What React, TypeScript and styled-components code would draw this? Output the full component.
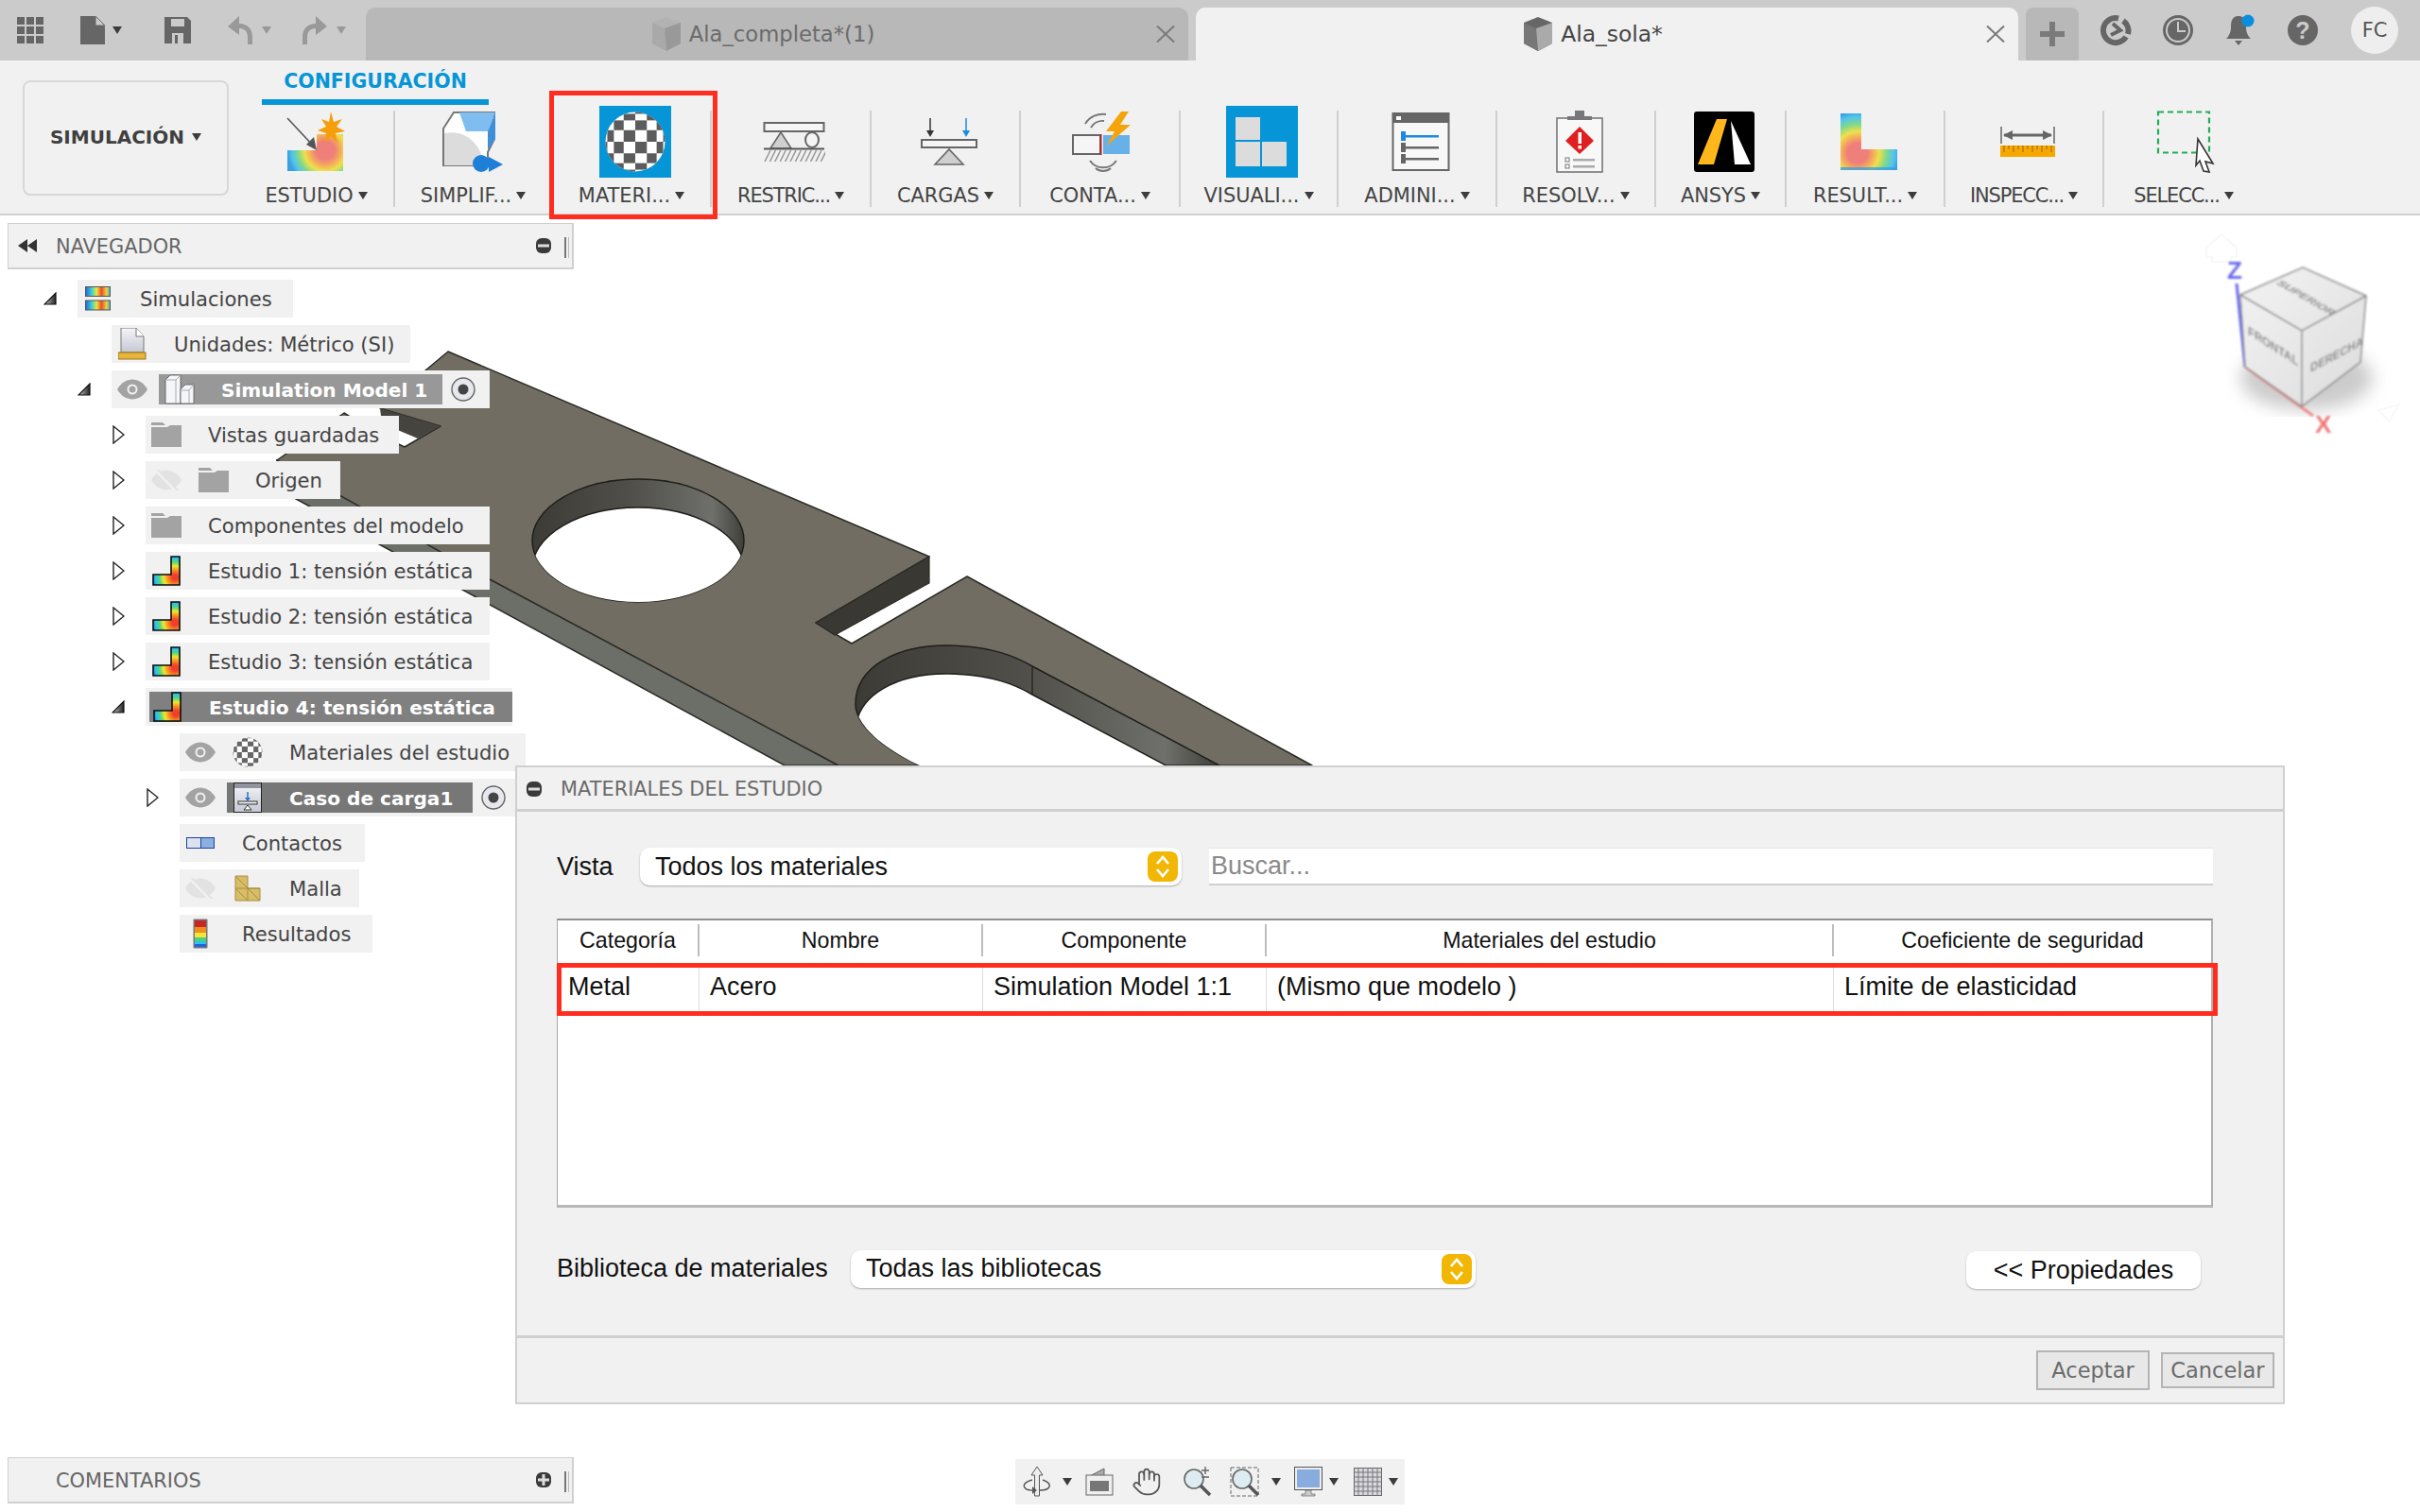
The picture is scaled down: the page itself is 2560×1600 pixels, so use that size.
import React from 'react';
import styled, { createGlobalStyle } from 'styled-components';
import { Hand } from 'lucide-react';

const UI_FONT = '"DejaVu Sans", sans-serif';
const DIALOG_FONT = '"Liberation Sans", Arial, sans-serif';

const GlobalStyle = createGlobalStyle`
  html, body {
    margin: 0;
    padding: 0;
    background: #fff;
  }
  * {
    box-sizing: border-box;
  }
`;

const Page = styled.div`
  position: relative;
  width: 2560px;
  height: 1600px;
  overflow: hidden;
  display: flex;
  flex-direction: column;
  background: #fff;
  font-family: ${UI_FONT};
  font-size: 20.9px;
  color: #444;
`;

/* ---------- title bar ---------- */

const TitleBar = styled.div`
  position: relative;
  z-index: 1;
  height: 64px;
  flex: none;
  display: flex;
  align-items: flex-end;
  background: #cbcbcb;
`;

const QuickTools = styled.div`
  width: 387px;
  height: 64px;
  flex: none;
  display: flex;
  align-items: center;
  padding-left: 18px;
`;

const QuickSlot = styled.div<{ $w: number }>`
  width: ${(p) => p.$w}px;
  flex: none;
  display: flex;
  align-items: center;
`;

const Tab = styled.div<{ $active?: boolean }>`
  width: 870px;
  height: 56px;
  flex: none;
  margin-right: 8px;
  display: flex;
  align-items: center;
  padding: 0 10px 0 8px;
  border-radius: 10px 10px 0 0;
  background: ${(p) => (p.$active ? '#f1f1f1' : '#b8b8b8')};
  color: ${(p) => (p.$active ? '#444' : '#6b6b6b')};
  font-size: ${(p) => (p.$active ? 23.4 : 22.7)}px;
`;

const TabTitle = styled.div`
  flex: 1;
  display: flex;
  justify-content: center;
  align-items: center;
  gap: 8px;
`;

const TabClose = styled.svg`
  width: 28px;
  height: 18px;
  flex: none;
`;

const AddTab = styled.div`
  width: 56px;
  height: 56px;
  flex: none;
  display: flex;
  align-items: center;
  justify-content: center;
  border-radius: 8px 8px 0 0;
  background: #b8b8b8;
`;

const StatusTools = styled.div`
  position: absolute;
  left: 2221px;
  top: 0;
  height: 64px;
  width: 330px;
  display: flex;
  align-items: center;
  gap: 32px;
`;

const Avatar = styled.div`
  width: 50px;
  height: 50px;
  margin-left: 2px;
  flex: none;
  display: flex;
  align-items: center;
  justify-content: center;
  border-radius: 50%;
  background: #eeeeee;
  font-size: 21px;
  color: #555;
`;

/* ---------- ribbon ---------- */

const Ribbon = styled.div`
  position: relative;
  z-index: 1;
  height: 164px;
  flex: none;
  display: flex;
  background: #f1f1f1;
  border-bottom: 2px solid #d0d0d0;
`;

const WorkspaceButton = styled.div`
  width: 218px;
  height: 122px;
  flex: none;
  margin: 21px 35px 0 24px;
  display: flex;
  align-items: center;
  justify-content: center;
  gap: 8px;
  padding-bottom: 2px;
  border: 2px solid #d8d8d8;
  border-radius: 8px;
  font-weight: 700;
  font-size: 20px;
  color: #3f3f3f;
`;

const RibbonMain = styled.div`
  display: flex;
  flex-direction: column;
`;

const RibbonTab = styled.div`
  width: 240px;
  height: 41px;
  margin-top: 6px;
  margin-bottom: 6px;
  display: flex;
  align-items: center;
  justify-content: center;
  padding-bottom: 3px;
  border-bottom: 6px solid #0696d7;
  color: #0696d7;
  font-weight: 700;
  font-size: 20.5px;
  white-space: nowrap;
`;

const RibbonGroups = styled.div`
  display: flex;
`;

const RibbonGroup = styled.div<{ $w: number; $pr?: number; $last?: boolean }>`
  width: ${(p) => p.$w}px;
  height: 102px;
  flex: none;
  display: flex;
  flex-direction: column;
  align-items: center;
  padding-right: ${(p) => p.$pr ?? 0}px;
  border-right: ${(p) => (p.$last ? 'none' : '2px solid #cfcfcf')};
`;

const RibbonIcon = styled.div<{ $shift: number }>`
  height: 76px;
  flex: none;
  margin-top: -5px;
  padding-left: ${(p) => p.$shift}px;
  display: flex;
  align-items: center;
  justify-content: center;
`;

const RibbonLabel = styled.div<{ $tight?: boolean }>`
  height: 24px;
  flex: none;
  margin-top: 7px;
  display: flex;
  align-items: center;
  gap: 5px;
  white-space: nowrap;
  letter-spacing: ${(p) => (p.$tight ? '-1.1px' : '0')};
`;

const Caret = styled.span<{ $ml?: number; $muted?: boolean }>`
  width: 0;
  height: 0;
  flex: none;
  margin-left: ${(p) => p.$ml ?? 0}px;
  border-left: 5.5px solid transparent;
  border-right: 5.5px solid transparent;
  border-top: 8px solid ${(p) => (p.$muted ? '#999' : '#3c3c3c')};
`;

const RedBox = styled.div`
  position: absolute;
  left: 581px;
  top: 96px;
  width: 178px;
  height: 136px;
  z-index: 6;
  border: 5px solid #ff2d20;
`;

/* ---------- workspace ---------- */

const Workspace = styled.div`
  position: relative;
  z-index: 2;
  flex: 1;
  display: flex;
  flex-direction: column;
  justify-content: space-between;
  padding: 8px 0 8px 0;
`;

const ModelCanvas = styled.svg`
  position: absolute;
  left: 0;
  top: 0;
  z-index: 0;
`;

const SharedDefs = styled.svg`
  position: absolute;
  width: 0;
  height: 0;
`;

const PanelBar = styled.div`
  width: 599px;
  height: 49px;
  margin-left: 8px;
  flex: none;
  display: flex;
  align-items: center;
  background: #f1f1f1;
  border: 2px solid #d0d0d0;
  border-top-width: 1px;
  border-left-width: 1px;
  color: #666;
`;

const PanelBarTitle = styled.div<{ $ml: number }>`
  flex: 1;
  margin-left: ${(p) => p.$ml}px;
  padding-top: 1px;
`;

const RewindSlot = styled.div`
  margin-left: 10px;
  display: flex;
`;

const GripSlot = styled.div`
  margin: 0 0 -4px 14px;
  display: flex;
`;

const NavColumn = styled.div`
  position: relative;
  z-index: 3;
`;

const Tree = styled.div`
  margin-top: 11px;
  display: flex;
  flex-direction: column;
  gap: 8px;
`;

const TreeLine = styled.div<{ $level: number }>`
  height: 40px;
  display: flex;
  padding-left: ${(p) => 46 + p.$level * 36}px;
`;

const ArrowSlot = styled.div`
  width: 36px;
  flex: none;
  display: flex;
  align-items: center;
`;

const TreeRow = styled.div<{ $w: number; $pl?: number }>`
  width: ${(p) => p.$w}px;
  height: 40px;
  flex: none;
  display: flex;
  align-items: center;
  padding-left: ${(p) => p.$pl ?? 6}px;
  background: #f1f1f1;
  font-size: 21.1px;
`;

const IconSlot = styled.div<{ $gap?: number }>`
  width: 32px;
  flex: none;
  margin-right: ${(p) => p.$gap ?? 28}px;
  display: flex;
  justify-content: center;
  align-items: center;
`;

const TreeText = styled.span`
  padding-top: 1px;
  white-space: nowrap;
`;

const Highlight = styled.div<{ $w: number; $bg: string; $pl?: number }>`
  width: ${(p) => p.$w}px;
  height: 32px;
  flex: none;
  display: flex;
  align-items: center;
  padding-left: ${(p) => p.$pl ?? 6}px;
  background: ${(p) => p.$bg};
  color: #fff;
  font-weight: 700;
  font-size: 20.1px;
`;

const RadioWrap = styled.div`
  margin-left: 9px;
  display: flex;
`;

/* ---------- dialog ---------- */

const Dialog = styled.div`
  position: absolute;
  left: 545px;
  top: 810px;
  width: 1872px;
  height: 676px;
  z-index: 2;
  display: flex;
  flex-direction: column;
  background: #f1f1f1;
  border: 2px solid #d0d0d0;
`;

const DialogHeader = styled.div`
  height: 47px;
  flex: none;
  display: flex;
  align-items: center;
  gap: 20px;
  padding: 1px 0 0 10px;
  border-bottom: 3px solid #cfcfcf;
  color: #6b6b6b;
`;

const DialogBody = styled.div`
  flex: 1;
  display: flex;
  flex-direction: column;
  padding: 38px 74px 0 42px;
  font-family: ${DIALOG_FONT};
  font-size: 27px;
  color: #111;
`;

const FormRow = styled.div`
  display: flex;
  align-items: center;
`;

const FieldLabel = styled.div<{ $w: number }>`
  width: ${(p) => p.$w}px;
  flex: none;
  white-space: nowrap;
`;

const SelectBox = styled.div<{ $w: number }>`
  width: ${(p) => p.$w}px;
  height: 40px;
  flex: none;
  display: flex;
  align-items: center;
  justify-content: space-between;
  padding: 0 4px 0 16px;
  background: #fff;
  border-radius: 10px;
  box-shadow: 0 1px 2px rgba(0, 0, 0, 0.3);
`;

const Stepper = styled.div`
  width: 32px;
  height: 32px;
  flex: none;
  display: flex;
  align-items: center;
  justify-content: center;
  border-radius: 8px;
  background: #f2b705;
`;

const SearchBox = styled.div`
  flex: 1;
  height: 40px;
  margin-left: 29px;
  padding-left: 2px;
  display: flex;
  align-items: center;
  background: #fff;
  border-bottom: 2px solid #cfcfcf;
  border-top: 1px solid #e6e6e6;
  color: #8a8a8a;
`;

const TableFrame = styled.div`
  position: relative;
  height: 306px;
  margin-top: 35px;
  background: #fff;
  border-top: 2px solid #8f8f8f;
  border-left: 1px solid #a8a8a8;
  border-right: 2px solid #b0b0b0;
  border-bottom: 3px solid #b8b8b8;
`;

const TableGrid = styled.div`
  display: grid;
  grid-template-columns: 150px 300px 300px 600px 1fr;
`;

const HeadCell = styled.div<{ $last?: boolean }>`
  height: 34px;
  margin: 4px 0 7px;
  display: flex;
  align-items: center;
  justify-content: center;
  font-size: 23.2px;
  color: #111;
  border-right: ${(p) => (p.$last ? 'none' : '2px solid #bdbdbd')};
`;

const BodyCell = styled.div<{ $last?: boolean }>`
  height: 56px;
  display: flex;
  align-items: center;
  padding: 0 0 5px 11px;
  border-right: ${(p) => (p.$last ? 'none' : '1px solid #dddddd')};
`;

const RowOutline = styled.div`
  position: absolute;
  left: -1px;
  right: -7px;
  top: 45px;
  height: 56px;
  border: 5px solid #ff2d20;
`;

const LibraryRow = styled(FormRow)`
  margin-top: 43px;
`;

const PropertiesButton = styled.div`
  width: 248px;
  height: 40px;
  margin: 3px 13px 0 auto;
  display: flex;
  align-items: center;
  justify-content: center;
  background: #fff;
  border-radius: 10px;
  box-shadow: 0 1px 2px rgba(0, 0, 0, 0.25);
`;

const DialogFooter = styled.div`
  height: 71px;
  flex: none;
  display: flex;
  align-items: center;
  justify-content: flex-end;
  gap: 12px;
  padding-right: 9px;
  border-top: 3px solid #cfcfcf;
`;

const FooterButton = styled.div<{ $h: number }>`
  width: 120px;
  height: ${(p) => p.$h}px;
  display: flex;
  align-items: center;
  justify-content: center;
  background: #e8e8e8;
  border: 2px solid #b4b4b4;
  color: #6b6b6b;
  font-size: 22.5px;
`;

/* ---------- bottom ---------- */

const BottomRow = styled.div`
  position: relative;
  z-index: 3;
  display: flex;
  align-items: flex-start;
`;

const NavBar = styled.div`
  width: 412px;
  height: 48px;
  margin: 2px 0 0 467px;
  display: flex;
  align-items: center;
  background: #f1f1f1;
`;

const NavSlot = styled.div<{ $ml: number }>`
  margin-left: ${(p) => p.$ml}px;
  display: flex;
  align-items: center;
`;

/* ---------- drawings ---------- */

const HeatDefs = () => (
  <SharedDefs>
    <defs>
      <radialGradient id="heatStudy" gradientUnits="userSpaceOnUse" cx="24" cy="23" r="24">
        <stop offset="0.12" stopColor="#f23c2c" />
        <stop offset="0.34" stopColor="#f79a1f" />
        <stop offset="0.5" stopColor="#f0e634" />
        <stop offset="0.68" stopColor="#53d67c" />
        <stop offset="0.85" stopColor="#2bc4ea" />
        <stop offset="1" stopColor="#2364e0" />
      </radialGradient>
      <radialGradient id="heatSoft" gradientUnits="userSpaceOnUse" cx="42" cy="42" r="40">
        <stop offset="0.24" stopColor="#ef7f7a" />
        <stop offset="0.38" stopColor="#f4a55f" />
        <stop offset="0.55" stopColor="#efe04a" />
        <stop offset="0.72" stopColor="#7fd88e" />
        <stop offset="0.88" stopColor="#52c4ee" />
        <stop offset="1" stopColor="#3a9fe0" />
      </radialGradient>
      <radialGradient id="heatResult" gradientUnits="userSpaceOnUse" cx="18" cy="42" r="44">
        <stop offset="0.24" stopColor="#ef7f7a" />
        <stop offset="0.36" stopColor="#f4a55f" />
        <stop offset="0.52" stopColor="#efe04a" />
        <stop offset="0.7" stopColor="#7fd88e" />
        <stop offset="0.88" stopColor="#52c4ee" />
        <stop offset="1" stopColor="#3a9fe0" />
      </radialGradient>
      <linearGradient id="heatBand" x1="0" x2="1" y1="0" y2="0">
        <stop offset="0" stopColor="#2364e0" />
        <stop offset="0.25" stopColor="#39d0d0" />
        <stop offset="0.45" stopColor="#e8e63c" />
        <stop offset="0.65" stopColor="#f04a2c" />
        <stop offset="0.85" stopColor="#e8d43c" />
        <stop offset="1" stopColor="#38b0e0" />
      </linearGradient>
      <linearGradient id="paper" x1="0" x2="0" y1="0" y2="1">
        <stop offset="0" stopColor="#f4f5f8" />
        <stop offset="1" stopColor="#c4c8d2" />
      </linearGradient>
      <linearGradient id="wallShade" x1="0" x2="1" y1="0" y2="0">
        <stop offset="0" stopColor="#3c3b36" />
        <stop offset="0.45" stopColor="#4f4e49" />
        <stop offset="0.85" stopColor="#6f706b" />
        <stop offset="1" stopColor="#3f3f3a" />
      </linearGradient>
      <linearGradient id="cubeFace" x1="0" x2="1" y1="0" y2="1">
        <stop offset="0" stopColor="#f3f3f3" />
        <stop offset="1" stopColor="#dcdcdc" />
      </linearGradient>
      <linearGradient id="arrowFill" x1="0" x2="1" y1="0" y2="0">
        <stop offset="0" stopColor="#c8c8c8" />
        <stop offset="1" stopColor="#222" />
      </linearGradient>
      <filter id="softBlur">
        <feGaussianBlur stdDeviation="9" />
      </filter>
      <filter id="tinyBlur">
        <feGaussianBlur stdDeviation="0.8" />
      </filter>
    </defs>
  </SharedDefs>
);

const CheckerSphere = ({ size, id, dark = '#5c5c5c' }: { size: number; id: string; dark?: string }) => {
  const r = size / 2;
  const edges = [-4, -3, -2, -1, 0, 1, 2, 3, 4].map((i) => r + r * Math.sin((i * Math.PI) / 8));
  const cells: React.ReactNode[] = [];
  for (let c = 0; c < 8; c++) {
    for (let w = 0; w < 8; w++) {
      if ((c + w) % 2 === 0) {
        cells.push(
          <rect key={`${c}-${w}`} x={edges[c]} y={edges[w]} width={edges[c + 1] - edges[c]} height={edges[w + 1] - edges[w]} fill={dark} />,
        );
      }
    }
  }
  return (
    <svg width={size} height={size} viewBox={`0 0 ${size} ${size}`}>
      <clipPath id={id}>
        <circle cx={r} cy={r} r={r - 0.5} />
      </clipPath>
      <circle cx={r} cy={r} r={r - 0.5} fill="#fff" />
      <g clipPath={`url(#${id})`}>{cells}</g>
    </svg>
  );
};

const StudyRibbonIcon = () => (
  <svg width="66" height="66" viewBox="0 0 66 66">
    <path d="M33 25 H61 V64 H2 V42 H33 Z" fill="url(#heatSoft)" />
    <path d="M2 8 L30 38" stroke="#555" strokeWidth="1.6" />
    <path d="M33 42 L22 36 L30 28 Z" fill="#555" />
    <path
      d="M48 1 L51 12 L60 9 L54 17 L63 22 L53 24 L55 35 L48 27 L42 35 L43 24 L34 21 L43 17 L38 9 L46 12 Z"
      fill="#f59e0b"
    />
  </svg>
);

const SimplifyIcon = () => (
  <svg width="66" height="66" viewBox="0 0 66 66">
    <path d="M12 2 H55 V30 L48 44 V58 H1 V19 Z" fill="#fff" stroke="#777" strokeWidth="2" />
    <path d="M2 24 C20 20 40 30 44 58 H2 Z" fill="#dcdcdc" />
    <path d="M18 2 H56 L48 22 H25 Z" fill="#7fbdf0" />
    <path d="M56 2 V30 L48 42 V22 Z" fill="#3f8fd8" />
    <circle cx="41" cy="56" r="9" fill="#1e7fd8" />
    <path d="M49 49 L64 57 L49 65 Z" fill="#1e7fd8" />
  </svg>
);

const BlueTile = styled.div`
  width: 76px;
  height: 76px;
  display: flex;
  align-items: center;
  justify-content: center;
  background: #0696d7;
`;

const RestraintIcon = () => (
  <svg width="66" height="42" viewBox="0 0 66 42">
    <rect x="1.5" y="1" width="63" height="9" fill="#f5f5f5" stroke="#666" strokeWidth="2" />
    <path d="M8 28 L19 11 L30 28 Z" fill="#cfcfcf" stroke="#666" strokeWidth="1.5" />
    <ellipse cx="52" cy="19" rx="7" ry="8" fill="#f5f5f5" stroke="#666" strokeWidth="2" />
    <rect x="1" y="27.5" width="64" height="2" fill="#555" />
    <g stroke="#999" strokeWidth="1.6">
      {Array.from({ length: 12 }).map((_, i) => (
        <path key={i} d={`M${2 + i * 5.4} 42 L${8 + i * 5.4} 30`} />
      ))}
    </g>
  </svg>
);

const LoadIcon = () => (
  <svg width="62" height="50" viewBox="0 0 62 50">
    <path d="M11 0 V14" stroke="#333" strokeWidth="1.5" />
    <path d="M7 13 L11 20 L15 13 Z" fill="#333" />
    <path d="M49 0 V14" stroke="#1e88e5" strokeWidth="1.5" />
    <path d="M45 13 L49 20 L53 13 Z" fill="#1e88e5" />
    <rect x="2" y="23" width="58" height="8" fill="#f5f5f5" stroke="#666" strokeWidth="2" />
    <path d="M16 49 L31 33 L46 49 Z" fill="#cfcfcf" stroke="#666" strokeWidth="1.6" />
  </svg>
);

const ContactIcon = () => (
  <svg width="66" height="66" viewBox="0 0 66 66">
    <path d="M14 14 A22 22 0 0 1 36 4" fill="none" stroke="#777" strokeWidth="2" />
    <path d="M20 18 A14 14 0 0 1 34 11" fill="none" stroke="#777" strokeWidth="2" />
    <rect x="1" y="26" width="29" height="20" fill="#f5f5f5" stroke="#666" strokeWidth="2" />
    <rect x="33" y="26" width="28" height="20" fill="#68b0e8" />
    <rect x="29.5" y="25" width="2" height="22" fill="#b0282c" />
    <path d="M52 1 L36 22 L45 22 L36 38 L62 15 L51 15 L60 1 Z" fill="#f5a50b" />
    <path d="M19 53 A17 17 0 0 0 47 53" fill="none" stroke="#777" strokeWidth="2" />
    <path d="M25 61 A12 12 0 0 0 41 61" fill="none" stroke="#777" strokeWidth="2" />
  </svg>
);

const DisplayTiles = styled.div`
  width: 76px;
  height: 76px;
  display: grid;
  grid-template-columns: 26px 26px;
  grid-template-rows: 24px 26px;
  gap: 2px;
  padding: 12px 10px;
  background: #0696d7;
`;

const DisplayTile = styled.div`
  background: #dcdcdc;
`;

const ManageIcon = () => (
  <svg width="62" height="62" viewBox="0 0 62 62">
    <rect x="1.5" y="1" width="59" height="60" fill="#f8f8f8" stroke="#666" strokeWidth="2" />
    <rect x="1" y="0" width="60" height="11" fill="#666" />
    <rect x="5" y="4" width="5" height="4" fill="#fff" />
    <rect x="10" y="20" width="5" height="10" fill="#1e88e5" />
    <rect x="15" y="24" width="35" height="2.5" fill="#1e88e5" />
    <rect x="10" y="32" width="5" height="10" fill="#666" />
    <rect x="15" y="36" width="35" height="2.5" fill="#666" />
    <rect x="10" y="44" width="5" height="10" fill="#666" />
    <rect x="15" y="48" width="35" height="2.5" fill="#666" />
  </svg>
);

const SolveIcon = () => (
  <svg width="50" height="66" viewBox="0 0 50 66">
    <rect x="1" y="8" width="48" height="57" fill="#f8f8f8" stroke="#777" strokeWidth="1.6" />
    <path d="M12 10 V6 H20 V0 H30 V6 H38 V10 Z" fill="#777" />
    <path d="M25 17 L40 32 L25 46 L10 32 Z" fill="#e02020" />
    <rect x="23.5" y="23" width="3.5" height="12" fill="#fff" />
    <rect x="23.5" y="37" width="3.5" height="3.5" fill="#fff" />
    <rect x="10" y="50" width="4" height="4" fill="none" stroke="#777" />
    <rect x="10" y="57" width="4" height="4" fill="none" stroke="#777" />
    <rect x="18" y="51" width="23" height="2.5" fill="#aaa" />
    <rect x="18" y="58" width="23" height="2.5" fill="#aaa" />
  </svg>
);

const AnsysIcon = () => (
  <svg width="64" height="64" viewBox="0 0 64 64">
    <rect width="64" height="64" rx="3" fill="#000" />
    <path d="M24 8 H35 L21 56 H4 Z" fill="#ffb71b" />
    <path d="M39 10 L60 56 H43 Z" fill="#fff" />
  </svg>
);

const ResultIcon = () => (
  <svg width="60" height="60" viewBox="0 0 60 60">
    <path d="M0 0 H22 V38 H60 V60 H0 Z" fill="url(#heatResult)" />
    <rect x="0" y="57" width="60" height="3" fill="#3a9fe0" opacity="0.8" />
  </svg>
);

const InspectIcon = () => (
  <svg width="58" height="32" viewBox="0 0 58 32">
    <path d="M1 0 V18 M57 0 V18" stroke="#666" strokeWidth="1.5" />
    <path d="M4 9 H54" stroke="#666" strokeWidth="3" />
    <path d="M3 9 L13 4 V14 Z M55 9 L45 4 V14 Z" fill="#666" />
    <rect x="0" y="20" width="58" height="12" fill="#f6a800" />
    <g stroke="#a86f00" strokeWidth="1.2">
      {Array.from({ length: 11 }).map((_, i) => (
        <path key={i} d={`M${4 + i * 5} 20 V${i % 2 === 0 ? 27 : 24}`} />
      ))}
    </g>
  </svg>
);

const SelectIcon = () => (
  <svg width="66" height="66" viewBox="0 0 66 66">
    <rect x="2" y="1.5" width="54" height="43" fill="none" stroke="#21ad57" strokeWidth="2.2" strokeDasharray="6 4" />
    <path d="M44 30 L60 56 L52 54 L56 65 L50 64 L46 53 L42 58 Z" fill="#fff" stroke="#333" strokeWidth="1.6" />
  </svg>
);

const BodyCube = ({ light, dark, mid }: { light: string; dark: string; mid: string }) => (
  <svg width="32" height="36" viewBox="0 0 32 36">
    <path d="M16 0 L31 6 V28 L16 36 L1 28 V6 Z" fill={mid} />
    <path d="M1 6 L14 12 L16 36 L1 28 Z" fill={light} />
    <path d="M14 12 L31 6 V28 L16 36 Z" fill={dark} />
  </svg>
);

const CloseX = () => (
  <TabClose viewBox="0 0 28 18">
    <path d="M5 0.5 L23 17.5 M23 0.5 L5 17.5" stroke="#7a7a7a" strokeWidth="2" />
  </TabClose>
);

const GridIcon = () => (
  <svg width="28" height="28" viewBox="0 0 28 28" fill="#666">
    {[0, 10, 20].map((x) => [0, 10, 20].map((y) => <rect key={`${x}${y}`} x={x} y={y} width="8" height="8" />))}
  </svg>
);

const FileIcon = () => (
  <svg width="26" height="30" viewBox="0 0 26 30">
    <path d="M0 0 H15 L26 11 V30 H0 Z" fill="#666" />
    <path d="M16 0 L26 10 H16 Z" fill="#cbcbcb" stroke="#666" />
  </svg>
);

const SaveIcon = () => (
  <svg width="28" height="28" viewBox="0 0 28 28">
    <path d="M0 0 H24 L28 4 V28 H0 Z" fill="#666" />
    <rect x="7" y="2" width="14" height="8" fill="#cbcbcb" />
    <rect x="8" y="17" width="12" height="11" fill="#cbcbcb" />
    <rect x="11" y="19" width="3" height="9" fill="#666" />
  </svg>
);

const UndoIcon = () => (
  <svg width="26" height="30" viewBox="0 0 26 30">
    <path d="M12 0 L0 11 L12 20 V13 C18 13 21 17 21 22 V30 H26 V22 C26 13 20 8 12 8 Z" fill="#999" />
  </svg>
);

const RedoIcon = () => (
  <svg width="26" height="30" viewBox="0 0 26 30">
    <path d="M14 0 L26 11 L14 20 V13 C8 13 5 17 5 22 V30 H0 V22 C0 13 6 8 14 8 Z" fill="#999" />
  </svg>
);

const Plus = () => (
  <svg width="26" height="26" viewBox="0 0 26 26" fill="#7a7a7a">
    <rect x="10" y="0" width="6" height="26" />
    <rect x="0" y="10" width="26" height="6" />
  </svg>
);

const SyncIcon = () => (
  <svg width="34" height="34" viewBox="0 0 34 34">
    <path d="M20 4.5 A13 13 0 1 0 28 24" fill="none" stroke="#666" strokeWidth="6" />
    <path d="M30 21 A13 13 0 0 0 25 7" fill="none" stroke="#666" strokeWidth="6" />
    <path d="M14 10 L22 17 L12 22" fill="none" stroke="#666" strokeWidth="4" />
  </svg>
);

const ClockIcon = () => (
  <svg width="34" height="34" viewBox="0 0 34 34">
    <circle cx="17" cy="17" r="16" fill="#666" />
    <circle cx="17" cy="17" r="13" fill="#cbcbcb" />
    <circle cx="17" cy="17" r="11" fill="#666" />
    <path d="M17 8 V18 H25" stroke="#cbcbcb" strokeWidth="2" fill="none" />
  </svg>
);

const BellIcon = () => (
  <svg width="34" height="34" viewBox="0 0 34 34">
    <path d="M15 2 C22 2 23 8 23 14 C23 20 26 24 28 26 H2 C4 24 7 20 7 14 C7 8 8 2 15 2 Z" fill="#666" />
    <path d="M11 28 H19 L15 33 Z" fill="#666" />
    <circle cx="25" cy="7" r="6.5" fill="#0a8fe0" />
  </svg>
);

const HelpIcon = () => (
  <svg width="34" height="34" viewBox="0 0 34 34">
    <circle cx="17" cy="17" r="16" fill="#666" />
    <text x="17" y="26" textAnchor="middle" fontFamily="Liberation Sans" fontWeight="700" fontSize="25" fill="#cbcbcb">
      ?
    </text>
  </svg>
);

const Rewind = () => (
  <svg width="20" height="14" viewBox="0 0 20 14" fill="#333">
    <path d="M0 7 L10 0 V14 Z M10 7 L20 0 V14 Z" />
  </svg>
);

const PillButton = ({ plus }: { plus?: boolean }) => (
  <svg width="16" height="16" viewBox="0 0 16 16">
    <rect width="16" height="16" rx="6" fill="#3a3a3a" />
    <rect x="2" y="6.5" width="12" height="3" fill="#ddd" />
    {plus && <rect x="6.5" y="2" width="3" height="12" fill="#ddd" />}
  </svg>
);

const Grip = () => (
  <svg width="8" height="22" viewBox="0 0 8 22">
    <rect x="0" y="0" width="2" height="22" fill="#777" />
    <rect x="4" y="0" width="1" height="22" fill="#bbb" />
  </svg>
);

const OpenArrow = () => (
  <svg width="14" height="20" viewBox="0 0 14 20">
    <path d="M2 1 L13 10 L2 19 Z" fill="#fff" stroke="#222" strokeWidth="1.4" />
  </svg>
);

const ClosedArrow = () => (
  <svg width="14" height="14" viewBox="0 0 14 14">
    <path d="M13 1 V13 H1 Z" fill="url(#arrowFill)" stroke="#111" strokeWidth="1.2" />
  </svg>
);

const EyeIcon = ({ off }: { off?: boolean }) => (
  <svg width="32" height="22" viewBox="0 0 32 22">
    <path d="M0 11 C8 -3 24 -3 32 11 C24 25 8 25 0 11 Z" fill={off ? '#e2e2e2' : '#a3a3a3'} />
    {!off && <circle cx="16" cy="11" r="5.5" fill="#f1f1f1" />}
    {!off && <circle cx="16" cy="11" r="3.5" fill="#a3a3a3" />}
    {off && <path d="M4 -1 L27 23" stroke="#f1f1f1" strokeWidth="4" />}
    {off && <path d="M6 -1 L29 23" stroke="#e2e2e2" strokeWidth="2" />}
  </svg>
);

const RadioIcon = () => (
  <svg width="26" height="26" viewBox="0 0 26 26">
    <circle cx="13" cy="13" r="12" fill="#e6e8ee" stroke="#666" strokeWidth="1.4" />
    <circle cx="13" cy="13" r="5.5" fill="#444" />
  </svg>
);

const FolderIcon = () => (
  <svg width="32" height="26" viewBox="0 0 32 26" fill="#a3a3a3">
    <path d="M0 0 H12 L15 3 H0 Z" />
    <path d="M0 5 H17 L20 3 H32 V26 H0 Z" />
  </svg>
);

const StudyIcon = () => (
  <svg width="30" height="32" viewBox="0 0 30 32">
    <path d="M1 20 H20 V1 H29 V31 H1 Z" fill="url(#heatStudy)" stroke="#0d0d0d" strokeWidth="1.6" />
  </svg>
);

const SimulationsIcon = () => (
  <svg width="28" height="26" viewBox="0 0 28 26">
    <rect x="0.5" y="0.5" width="26" height="10" fill="url(#heatBand)" stroke="#555" />
    <rect x="0.5" y="15" width="26" height="10" fill="url(#heatBand)" stroke="#555" />
  </svg>
);

const UnitsIcon = () => (
  <svg width="30" height="34" viewBox="0 0 30 34">
    <path d="M3 0 H19 L27 9 V26 H3 Z" fill="url(#paper)" stroke="#777" />
    <path d="M19 0 V9 H27" fill="#fff" stroke="#777" />
    <rect x="0" y="26" width="29" height="7" fill="#e8b33a" stroke="#9a7514" />
  </svg>
);

const ModelBlocks = () => (
  <svg width="32" height="32" viewBox="0 0 32 32">
    <path d="M1 6 L6 1 H17 V31 H1 Z" fill="#f4f6fa" stroke="#555" strokeWidth="0.8" />
    <path d="M1 6 H12 L17 1 M12 6 V31" fill="none" stroke="#aaa" />
    <path d="M17 16 L22 11 H31 V31 H17 Z" fill="#f4f6fa" stroke="#555" strokeWidth="0.8" />
    <path d="M17 17 H26 L31 11 M26 17 V31" fill="none" stroke="#aaa" />
  </svg>
);

const LoadCaseIcon = () => (
  <svg width="30" height="32" viewBox="0 0 30 32">
    <rect x="0.5" y="0.5" width="29" height="31" fill="url(#paper)" stroke="#222" />
    <rect x="1" y="1" width="28" height="5" fill="#8f949e" />
    <path d="M15 10 V18" stroke="#2a6fd0" strokeWidth="1.5" />
    <path d="M12 16 L15 20 L18 16 Z" fill="#2a6fd0" />
    <rect x="5" y="20" width="20" height="3" fill="#eee" stroke="#333" />
    <path d="M11 29 L15 24 L19 29 Z" fill="#fff" stroke="#333" />
  </svg>
);

const ContactsIcon = () => (
  <svg width="30" height="12" viewBox="0 0 30 12">
    <rect x="0.5" y="0.5" width="15" height="11" fill="#dde3ee" stroke="#1f3f9f" />
    <rect x="15.5" y="0.5" width="14" height="11" fill="#8ab0e0" stroke="#1f3f9f" />
  </svg>
);

const MeshIcon = () => (
  <svg width="28" height="28" viewBox="0 0 28 28">
    <path d="M1 1 H14 V14 H27 V27 H1 Z" fill="#d8bd68" stroke="#a88e3e" />
    <path d="M1 14 H27 M14 14 V27 M1 1 L14 14 M1 14 L14 27 M14 14 L27 27" stroke="#a88e3e" fill="none" />
  </svg>
);

const LegendIcon = () => (
  <svg width="16" height="32" viewBox="0 0 16 32">
    <rect x="0.5" y="0.5" width="15" height="31" rx="1" fill="#777" />
    <rect x="2" y="2" width="12" height="7" fill="#c62828" />
    <rect x="2" y="9" width="12" height="6" fill="#ef8f1c" />
    <rect x="2" y="15" width="12" height="5" fill="#f4e53c" />
    <rect x="2" y="20" width="12" height="4" fill="#4ed07a" />
    <rect x="2" y="24" width="12" height="3" fill="#2bc4ea" />
    <rect x="2" y="27" width="12" height="3" fill="#2364e0" />
  </svg>
);

const StepperIcon = () => (
  <svg width="16" height="26" viewBox="0 0 16 26" fill="none" stroke="#fff" strokeWidth="2.6">
    <path d="M2 10 L8 3 L14 10" />
    <path d="M2 16 L8 23 L14 16" />
  </svg>
);

const OrbitIcon = () => (
  <svg width="30" height="32" viewBox="0 0 30 32">
    <path d="M15 0 L21 9 H17.5 V31 H12.5 V9 H9 Z" fill="#eee" stroke="#555" />
    <path d="M10 14 C-3 17 -1 26 13 25 M18 25 C30 25 32 18 21 14" fill="none" stroke="#555" strokeWidth="1.4" />
    <path d="M15 25 L10 21 V29 Z" fill="#555" />
  </svg>
);

const LookIcon = () => (
  <svg width="30" height="30" viewBox="0 0 30 30">
    <path d="M3 10 L20 1 V10 Z" fill="#aaa" stroke="#666" />
    <rect x="1" y="8" width="28" height="21" fill="#efefef" stroke="#666" />
    <rect x="5" y="14" width="20" height="11" fill="#777" />
  </svg>
);

const ZoomIcon = ({ plus, dashed }: { plus?: boolean; dashed?: boolean }) => (
  <svg width="32" height="32" viewBox="0 0 32 32">
    {dashed && <rect x="1" y="1" width="29" height="30" fill="none" stroke="#666" strokeDasharray="4 2" />}
    <circle cx="13" cy="13" r="10" fill="#dcecf0" stroke="#666" strokeWidth="1.6" />
    <path d="M20 20 L30 30" stroke="#555" strokeWidth="3.5" />
    {plus && <path d="M25 0 V8 M21 4 H29 M21 11 H29" stroke="#666" strokeWidth="1.4" />}
  </svg>
);

const DisplayIcon = () => (
  <svg width="30" height="32" viewBox="0 0 30 32">
    <rect x="0.5" y="0.5" width="29" height="24" fill="#eee" stroke="#555" />
    <rect x="3" y="3" width="24" height="19" fill="#88acde" />
    <path d="M12 25 H18 V29 H22 V31 H8 V29 H12 Z" fill="#ccc" stroke="#666" strokeWidth="0.7" />
  </svg>
);

const GridPlaneIcon = () => (
  <svg width="30" height="30" viewBox="0 0 30 30">
    <rect x="0.5" y="0.5" width="29" height="29" fill="#d8d8e0" stroke="#666" />
    <g stroke="#777" strokeWidth="1">
      {[5, 10, 15, 20, 25].map((v) => (
        <path key={v} d={`M${v} 0 V30 M0 ${v} H30`} />
      ))}
    </g>
  </svg>
);

// the part and the orientation cube, in page coordinates
const ModelDrawing = () => (
  <ModelCanvas width="2560" height="1600" viewBox="0 0 2560 1600">
    <clipPath id="hole1">
      <ellipse cx="675" cy="572" rx="112" ry="65" />
    </clipPath>
    <clipPath id="hole2">
      <path d="M905 745 C905 705 950 682 1004 683 C1050 684 1075 695 1092 705 L1290 810 H973 C930 790 905 765 905 745 Z" />
    </clipPath>
    <path d="M293 487 L887 810 H830 L293 517 Z" fill="#6c6e68" stroke="#2b2a26" strokeWidth="1.5" />
    <path
      d="M474 372 L983 589 L863 659 L901 681 L1023 610 L1388 810 H887 L518 613 L293 487 L364 437 L400 460 L428 473 L466 451 L402 432 Z"
      fill="#716d62"
      stroke="#2b2a26"
      strokeWidth="1.5"
      strokeLinejoin="round"
    />
    <path d="M983 589 V617 L883 672 L863 659 Z" fill="#3a3832" stroke="#2b2a26" strokeWidth="1.2" />
    <path d="M402 432 L466 451 L442 464 L404 448 Z" fill="#45443f" />
    <ellipse cx="675" cy="572" rx="112" ry="65" fill="url(#wallShade)" stroke="#1f1e1a" strokeWidth="1.5" />
    <g clipPath="url(#hole1)">
      <ellipse cx="675" cy="602" rx="112" ry="65" fill="#fff" stroke="#1f1e1a" strokeWidth="1.5" />
    </g>
    <path
      d="M905 745 C905 705 950 682 1004 683 C1050 684 1075 695 1092 705 L1290 810 H973 C930 790 905 765 905 745 Z"
      fill="url(#wallShade)"
      stroke="#1f1e1a"
      strokeWidth="1.5"
    />
    <g clipPath="url(#hole2)">
      <path
        d="M905 775 C905 735 950 712 1004 713 C1050 714 1075 725 1092 735 L1290 840 H973 C930 820 905 795 905 775 Z"
        fill="#fff"
        stroke="#1f1e1a"
        strokeWidth="1.5"
      />
    </g>
    <path d="M1092 705 V735" stroke="#1f1e1a" strokeWidth="1.2" />

    <ellipse cx="2440" cy="400" rx="70" ry="34" fill="#999" opacity="0.5" filter="url(#softBlur)" />
    <path d="M2334 262 L2350 248 L2366 262 V272 H2360 V277 H2340 V272 H2334 Z" fill="none" stroke="#f8f8f8" strokeWidth="2" />
    <path d="M2516 434 L2538 428 L2527 446 Z" fill="none" stroke="#f8f8f8" strokeWidth="2" />
    <g filter="url(#tinyBlur)">
      <path d="M2366 300 L2375 388" stroke="#6a6af0" strokeWidth="3" fill="none" />
      <path d="M2375 388 L2447 440" stroke="#ee8a8a" strokeWidth="3" fill="none" />
      <path d="M2370 312 L2436 283 L2503 313 L2497 383 L2435 430 L2375 388 Z" fill="url(#cubeFace)" stroke="#8a8a8a" strokeWidth="1.5" />
      <path d="M2370 312 L2435 350 L2503 313 M2435 350 V430" fill="none" stroke="#8a8a8a" strokeWidth="1.5" />
      <text x="2356" y="295" fontFamily="Liberation Sans" fontWeight="700" fontSize="26" fill="#6a6af0">
        Z
      </text>
      <text x="2449" y="458" fontFamily="Liberation Sans" fontWeight="700" fontSize="26" fill="#f07878">
        X
      </text>
      <g fontFamily="Liberation Sans" fontWeight="700" fontSize="13" fill="#8a8a8a">
        <text transform="matrix(0.87 0.5 -0.75 0.4 2407 300)">SUPERIOR</text>
        <text transform="matrix(0.87 0.55 0 1 2378 354)">FRONTAL</text>
        <text transform="matrix(0.87 -0.45 0 1 2444 394)">DERECHA</text>
      </g>
    </g>
  </ModelCanvas>
);

/* ---------- data ---------- */

const ribbonGroups: { label: string; w: number; icon: React.ReactNode; tight?: boolean; pr?: number; last?: boolean; shift?: number }[] = [
  { label: 'ESTUDIO', w: 141, icon: <StudyRibbonIcon />, pr: 24, shift: 0 },
  { label: 'SIMPLIF...', w: 167, icon: <SimplifyIcon />, shift: 0 },
  {
    label: 'MATERI...',
    w: 168,
    icon: (
      <BlueTile>
        <CheckerSphere size={64} id="ribbonChecker" />
      </BlueTile>
    ),
  },
  { label: 'RESTRIC...', w: 169, icon: <RestraintIcon />, tight: true },
  { label: 'CARGAS', w: 158, icon: <LoadIcon /> },
  { label: 'CONTA...', w: 169, icon: <ContactIcon /> },
  {
    label: 'VISUALI...',
    w: 167,
    icon: (
      <DisplayTiles>
        <DisplayTile />
        <span />
        <DisplayTile />
        <DisplayTile />
      </DisplayTiles>
    ),
  },
  { label: 'ADMINI...', w: 168, icon: <ManageIcon /> },
  { label: 'RESOLV...', w: 168, icon: <SolveIcon /> },
  { label: 'ANSYS', w: 138, icon: <AnsysIcon /> },
  { label: 'RESULT...', w: 168, icon: <ResultIcon /> },
  { label: 'INSPECC...', w: 168, icon: <InspectIcon />, tight: true },
  { label: 'SELECC...', w: 168, icon: <SelectIcon />, last: true, tight: true },
];

type Row = {
  level: number;
  w: number;
  text: string;
  arrow?: 'open' | 'closed';
  eye?: 'on' | 'off';
  icon: React.ReactNode;
  highlight?: { w: number; bg: string; pl?: number };
  radio?: boolean;
  pl?: number;
};

const treeRows: Row[] = [
  { level: 0, w: 228, text: 'Simulaciones', arrow: 'closed', icon: <SimulationsIcon /> },
  { level: 1, w: 316, text: 'Unidades: Métrico (SI)', icon: <UnitsIcon /> },
  {
    level: 1,
    w: 400,
    text: 'Simulation Model 1',
    arrow: 'closed',
    eye: 'on',
    icon: <ModelBlocks />,
    highlight: { w: 300, bg: '#989898' },
    radio: true,
  },
  { level: 2, w: 268, text: 'Vistas guardadas', arrow: 'open', icon: <FolderIcon /> },
  { level: 2, w: 206, text: 'Origen', arrow: 'open', eye: 'off', icon: <FolderIcon /> },
  { level: 2, w: 364, text: 'Componentes del modelo', arrow: 'open', icon: <FolderIcon /> },
  { level: 2, w: 364, text: 'Estudio 1: tensión estática', arrow: 'open', icon: <StudyIcon /> },
  { level: 2, w: 364, text: 'Estudio 2: tensión estática', arrow: 'open', icon: <StudyIcon /> },
  { level: 2, w: 364, text: 'Estudio 3: tensión estática', arrow: 'open', icon: <StudyIcon /> },
  {
    level: 2,
    w: 388,
    text: 'Estudio 4: tensión estática',
    arrow: 'closed',
    icon: <StudyIcon />,
    highlight: { w: 384, bg: '#808080', pl: 3 },
    pl: 4,
  },
  { level: 3, w: 366, text: 'Materiales del estudio', eye: 'on', icon: <CheckerSphere size={32} id="treeChecker" dark="#666" /> },
  {
    level: 3,
    w: 360,
    text: 'Caso de carga1',
    arrow: 'open',
    eye: 'on',
    icon: <LoadCaseIcon />,
    highlight: { w: 260, bg: '#777777' },
    radio: true,
  },
  { level: 3, w: 196, text: 'Contactos', icon: <ContactsIcon /> },
  { level: 3, w: 190, text: 'Malla', eye: 'off', icon: <MeshIcon /> },
  { level: 3, w: 204, text: 'Resultados', icon: <LegendIcon /> },
];

const headers = ['Categoría', 'Nombre', 'Componente', 'Materiales del estudio', 'Coeficiente de seguridad'];
const cells = ['Metal', 'Acero', 'Simulation Model 1:1', '(Mismo que modelo )', 'Límite de elasticidad'];

const TreeItem: React.FC<{ row: Row }> = ({ row }) => {
  const main = (
    <>
      <IconSlot>{row.icon}</IconSlot>
      <TreeText>{row.text}</TreeText>
    </>
  );
  return (
    <TreeLine $level={row.level}>
      <ArrowSlot>
        {row.arrow === 'open' && <OpenArrow />}
        {row.arrow === 'closed' && <ClosedArrow />}
      </ArrowSlot>
      <TreeRow $w={row.w} $pl={row.pl}>
        {row.eye && (
          <IconSlot $gap={row.highlight ? 12 : 18}>
            <EyeIcon off={row.eye === 'off'} />
          </IconSlot>
        )}
        {row.highlight ? (
          <Highlight $w={row.highlight.w} $bg={row.highlight.bg} $pl={row.highlight.pl}>
            {main}
          </Highlight>
        ) : (
          main
        )}
        {row.radio && (
          <RadioWrap>
            <RadioIcon />
          </RadioWrap>
        )}
      </TreeRow>
    </TreeLine>
  );
};

const App: React.FC = () => {
  return (
    <Page>
      <GlobalStyle />
      <HeatDefs />
      <ModelDrawing />

      <TitleBar>
        <QuickTools>
          <QuickSlot $w={67}>
            <GridIcon />
          </QuickSlot>
          <QuickSlot $w={89}>
            <FileIcon />
            <Caret $ml={8} />
          </QuickSlot>
          <QuickSlot $w={67}>
            <SaveIcon />
          </QuickSlot>
          <QuickSlot $w={79}>
            <UndoIcon />
            <Caret $ml={10} $muted />
          </QuickSlot>
          <QuickSlot $w={60}>
            <RedoIcon />
            <Caret $ml={10} $muted />
          </QuickSlot>
        </QuickTools>
        <Tab>
          <TabTitle>
            <BodyCube light="#a9a9a9" dark="#999" mid="#b2b2b2" />
            Ala_completa*(1)
          </TabTitle>
          <CloseX />
        </Tab>
        <Tab $active>
          <TabTitle>
            <BodyCube light="#777" dark="#aaa" mid="#666" />
            Ala_sola*
          </TabTitle>
          <CloseX />
        </Tab>
        <AddTab>
          <Plus />
        </AddTab>
        <StatusTools>
          <SyncIcon />
          <ClockIcon />
          <BellIcon />
          <HelpIcon />
          <Avatar>FC</Avatar>
        </StatusTools>
      </TitleBar>

      <Ribbon>
        <WorkspaceButton>
          SIMULACIÓN
          <Caret />
        </WorkspaceButton>
        <RibbonMain>
          <RibbonTab>CONFIGURACIÓN</RibbonTab>
          <RibbonGroups>
            {ribbonGroups.map((g) => (
              <RibbonGroup key={g.label} $w={g.w} $pr={g.pr} $last={g.last}>
                <RibbonIcon $shift={g.shift ?? 7}>{g.icon}</RibbonIcon>
                <RibbonLabel $tight={g.tight}>
                  {g.label}
                  <Caret />
                </RibbonLabel>
              </RibbonGroup>
            ))}
          </RibbonGroups>
        </RibbonMain>
      </Ribbon>
      <RedBox />

      <Workspace>
        <NavColumn>
          <PanelBar>
            <RewindSlot>
              <Rewind />
            </RewindSlot>
            <PanelBarTitle $ml={20}>NAVEGADOR</PanelBarTitle>
            <PillButton />
            <GripSlot>
              <Grip />
            </GripSlot>
          </PanelBar>
          <Tree>
            {treeRows.map((row) => (
              <TreeItem key={row.text} row={row} />
            ))}
          </Tree>
        </NavColumn>

        <BottomRow>
          <PanelBar>
            <PanelBarTitle $ml={50}>COMENTARIOS</PanelBarTitle>
            <PillButton plus />
            <GripSlot>
              <Grip />
            </GripSlot>
          </PanelBar>
          <NavBar>
            <NavSlot $ml={8}>
              <OrbitIcon />
            </NavSlot>
            <NavSlot $ml={12}>
              <Caret />
            </NavSlot>
            <NavSlot $ml={14}>
              <LookIcon />
            </NavSlot>
            <NavSlot $ml={19}>
              <Hand size={32} color="#555" strokeWidth={1.3} />
            </NavSlot>
            <NavSlot $ml={21}>
              <ZoomIcon plus />
            </NavSlot>
            <NavSlot $ml={19}>
              <ZoomIcon dashed />
            </NavSlot>
            <NavSlot $ml={12}>
              <Caret />
            </NavSlot>
            <NavSlot $ml={14}>
              <DisplayIcon />
            </NavSlot>
            <NavSlot $ml={7}>
              <Caret />
            </NavSlot>
            <NavSlot $ml={16}>
              <GridPlaneIcon />
            </NavSlot>
            <NavSlot $ml={7}>
              <Caret />
            </NavSlot>
          </NavBar>
        </BottomRow>
      </Workspace>

      <Dialog>
        <DialogHeader>
          <PillButton />
          MATERIALES DEL ESTUDIO
        </DialogHeader>
        <DialogBody>
          <FormRow>
            <FieldLabel $w={88}>Vista</FieldLabel>
            <SelectBox $w={573}>
              Todos los materiales
              <Stepper>
                <StepperIcon />
              </Stepper>
            </SelectBox>
            <SearchBox>Buscar...</SearchBox>
          </FormRow>
          <TableFrame>
            <TableGrid>
              {headers.map((h, i) => (
                <HeadCell key={h} $last={i === headers.length - 1}>
                  {h}
                </HeadCell>
              ))}
              {cells.map((c, i) => (
                <BodyCell key={c} $last={i === cells.length - 1}>
                  {c}
                </BodyCell>
              ))}
            </TableGrid>
            <RowOutline />
          </TableFrame>
          <LibraryRow>
            <FieldLabel $w={311}>Biblioteca de materiales</FieldLabel>
            <SelectBox $w={661}>
              Todas las bibliotecas
              <Stepper>
                <StepperIcon />
              </Stepper>
            </SelectBox>
            <PropertiesButton>{'<< Propiedades'}</PropertiesButton>
          </LibraryRow>
        </DialogBody>
        <DialogFooter>
          <FooterButton $h={42}>Aceptar</FooterButton>
          <FooterButton $h={38}>Cancelar</FooterButton>
        </DialogFooter>
      </Dialog>
    </Page>
  );
};

export default App;
